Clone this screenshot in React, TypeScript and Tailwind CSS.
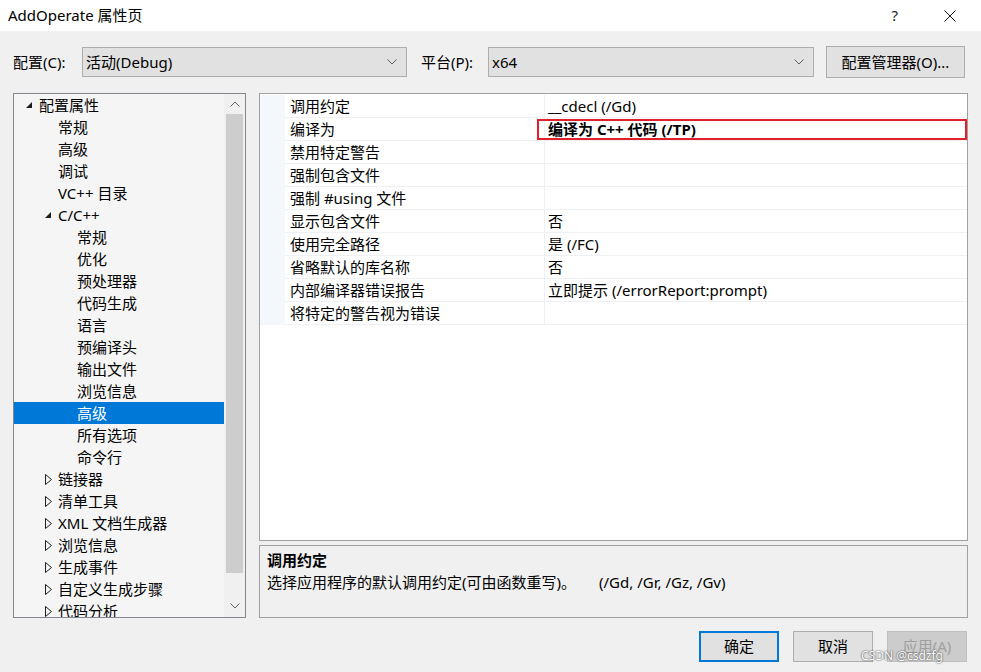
import React from "react";

const FONT = { fontFamily: '"Segoe UI", "Noto Sans", "Noto Sans CJK SC", sans-serif' };

type Node = { label: string; level: number; arrow?: "open" | "closed"; selected?: boolean };

const tree: Node[] = [
  { label: "配置属性", level: 0, arrow: "open" },
  { label: "常规", level: 1 },
  { label: "高级", level: 1 },
  { label: "调试", level: 1 },
  { label: "VC++ 目录", level: 1 },
  { label: "C/C++", level: 1, arrow: "open" },
  { label: "常规", level: 2 },
  { label: "优化", level: 2 },
  { label: "预处理器", level: 2 },
  { label: "代码生成", level: 2 },
  { label: "语言", level: 2 },
  { label: "预编译头", level: 2 },
  { label: "输出文件", level: 2 },
  { label: "浏览信息", level: 2 },
  { label: "高级", level: 2, selected: true },
  { label: "所有选项", level: 2 },
  { label: "命令行", level: 2 },
  { label: "链接器", level: 1, arrow: "closed" },
  { label: "清单工具", level: 1, arrow: "closed" },
  { label: "XML 文档生成器", level: 1, arrow: "closed" },
  { label: "浏览信息", level: 1, arrow: "closed" },
  { label: "生成事件", level: 1, arrow: "closed" },
  { label: "自定义生成步骤", level: 1, arrow: "closed" },
  { label: "代码分析", level: 1, arrow: "closed" },
];

const props: [string, string, boolean?][] = [
  ["调用约定", "__cdecl (/Gd)"],
  ["编译为", "编译为 C++ 代码 (/TP)", true],
  ["禁用特定警告", ""],
  ["强制包含文件", ""],
  ["强制 #using 文件", ""],
  ["显示包含文件", "否"],
  ["使用完全路径", "是 (/FC)"],
  ["省略默认的库名称", "否"],
  ["内部编译器错误报告", "立即提示 (/errorReport:prompt)"],
  ["将特定的警告视为错误", ""],
];

function Chevron({ dir = "down", color = "#606060" }: { dir?: "down" | "up"; color?: string }) {
  return (
    <svg width="10" height="6" viewBox="0 0 10 6">
      <polyline
        points={dir === "down" ? "0.5,0.5 5,5 9.5,0.5" : "0.5,5.5 5,1 9.5,5.5"}
        fill="none"
        stroke={color}
        strokeWidth="1"
      />
    </svg>
  );
}

function Combo({ value, width }: { value: string; width: string }) {
  return (
    <div className={`flex h-[30px] items-center justify-between border border-[#adadad] bg-[#e1e1e1] pl-[3px] pr-[9px] ${width}`}>
      <span className="text-[15px] text-black">{value}</span>
      <Chevron />
    </div>
  );
}

function Arrow({ kind }: { kind: "open" | "closed" }) {
  if (kind === "open")
    return (
      <svg width="8" height="8" viewBox="0 0 8 8">
        <polygon points="7,1 7,7 1,7" fill="#1e1e1e" />
      </svg>
    );
  return (
    <svg width="7" height="11" viewBox="0 0 7 11">
      <polygon points="0.5,0.5 6.5,5.5 0.5,10.5" fill="none" stroke="#1e1e1e" strokeWidth="1" />
    </svg>
  );
}

function Btn({ label, primary, disabled }: { label: string; primary?: boolean; disabled?: boolean }) {
  return (
    <div
      className={`flex h-[31px] w-[80px] items-center justify-center text-[15px] ${
        primary
          ? "border-2 border-[#0078d7] bg-[#e1e1e1] text-black"
          : disabled
          ? "border border-[#bfbfbf] bg-[#cccccc] text-[#a0a0a0]"
          : "border border-[#adadad] bg-[#e1e1e1] text-black"
      }`}
    >
      {label}
    </div>
  );
}

export default function App() {
  return (
    <div className="relative flex h-[672px] w-[981px] flex-col overflow-hidden bg-[#f0f0f0] text-black" style={FONT}>
      {/* Title bar */}
      <div className="flex h-[31px] items-center bg-white pl-[8px]">
        <span className="text-[15px]">AddOperate 属性页</span>
        <span className="ml-auto mr-[46px] text-[15px] text-[#222]">?</span>
        <svg className="mr-[25px]" width="12" height="12" viewBox="0 0 12 12">
          <path d="M0.5 0.5 L11.5 11.5 M11.5 0.5 L0.5 11.5" stroke="#111" strokeWidth="1" />
        </svg>
      </div>

      {/* Config row */}
      <div className="mt-[15px] flex items-center px-[13px]">
        <span className="w-[69px] text-[15px]">配置(C):</span>
        <Combo value="活动(Debug)" width="w-[325px]" />
        <span className="ml-[14px] w-[67px] text-[15px]">平台(P):</span>
        <Combo value="x64" width="w-[326px]" />
        <div className="ml-auto mr-[3px] flex h-[32px] w-[139px] items-center justify-center border border-[#adadad] bg-[#e1e1e1] text-[15px]">
          配置管理器(O)...
        </div>
      </div>

      {/* Main */}
      <div className="mt-[15px] flex h-[525px] gap-[13px] px-[13px]">
        {/* Tree */}
        <div className="flex w-[233px] border border-[#828790] bg-[#f5f5f5]">
          <div className="flex-1 overflow-hidden">
            {tree.map((n, i) => (
              <div
                key={i}
                className={`relative flex h-[22px] items-center text-[15px] ${
                  n.selected ? "bg-[#0078d7] text-white" : "text-black"
                }`}
              >
                {n.arrow && (
                  <span
                    className={`absolute flex w-[10px] justify-center ${n.level === 0 ? "left-[10px]" : "left-[29px]"}`}
                  >
                    <Arrow kind={n.arrow} />
                  </span>
                )}
                <span className={n.level === 0 ? "pl-[25px]" : n.level === 1 ? "pl-[44px]" : "pl-[63px]"}>
                  {n.label}
                </span>
              </div>
            ))}
          </div>
          <div className="flex w-[21px] flex-col items-center bg-[#f0f0f0]">
            <div className="flex h-[20px] items-center justify-center">
              <Chevron dir="up" />
            </div>
            <div className="h-[459px] w-[17px] bg-[#cdcdcd]" />
            <div className="flex flex-1 items-end justify-center pb-[8px]">
              <Chevron />
            </div>
          </div>
        </div>

        {/* Right column */}
        <div className="flex flex-1 flex-col gap-[4px]">
          <div className="relative flex-1 border border-[#a0a0a0] bg-white pt-px">
            {props.map(([k, v, bold], i) => (
              <div key={i} className="flex h-[23px] text-[15px]">
                <div className="w-[25px] bg-[#f4f7fc]" />
                <div className="flex w-[260px] items-center border-b border-r border-[#eef0f4] pl-[5px]">{k}</div>
                <div className={`flex flex-1 items-center border-b border-[#eef0f4] pl-[3px] ${bold ? "font-bold" : ""}`}>
                  {v}
                </div>
              </div>
            ))}
            <div className="pointer-events-none absolute left-[277px] top-[25px] h-[21px] w-[430px] border-2 border-[#e0202a]" />
          </div>
          <div className="h-[73px] border border-[#a0a0a0] bg-[#f0f0f0] px-[7px] pt-[3px] text-[15px]">
            <div className="font-bold leading-[22px]">调用约定</div>
            <div className="leading-[23px]">
              选择应用程序的默认调用约定(可由函数重写)。<span className="ml-[23px]">(/Gd, /Gr, /Gz, /Gv)</span>
            </div>
          </div>
        </div>
      </div>

      {/* Buttons */}
      <div className="mt-[13px] flex justify-end gap-[14px] pr-[14px]">
        <Btn label="确定" primary />
        <Btn label="取消" />
        <Btn label="应用(A)" disabled />
      </div>

      <span
        className="absolute left-[861px] top-[647px] text-[12px] text-white"
        style={{ textShadow: "0 0 2px #555, 0 0 1px #555" }}
      >
        CSDN @csdzfg
      </span>
    </div>
  );
}
